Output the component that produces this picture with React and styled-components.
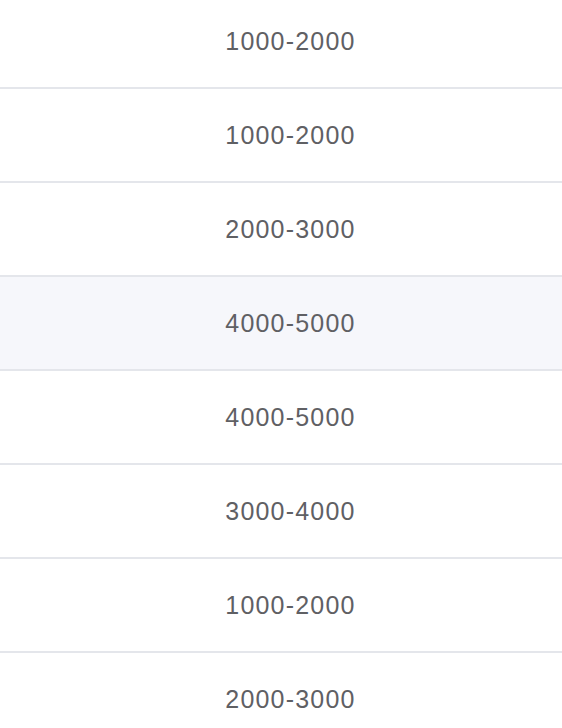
import React from "react";
import styled, { createGlobalStyle } from "styled-components";

const Global = createGlobalStyle`
  html, body { margin: 0; padding: 0; background: #ffffff; }
  body { font-family: "Liberation Sans", Arial, sans-serif; overflow: hidden; }
`;

const Table = styled.div`
  display: flex;
  flex-direction: column;
  width: 562px;
  margin-top: -5px;
`;

const Row = styled.div`
  display: flex;
  align-items: center;
  justify-content: center;
  height: 92px;
  border-bottom: 2px solid #e4e6eb;
  background: ${(p) => (p.$active ? "#f6f7fb" : "#ffffff")};
`;

const Cell = styled.span`
  font-size: 25px;
  line-height: 1;
  letter-spacing: 1.2px;
  color: #5f6064;
  padding-left: 19px;
`;

const rows = [
  "1000-2000",
  "1000-2000",
  "2000-3000",
  "4000-5000",
  "4000-5000",
  "3000-4000",
  "1000-2000",
  "2000-3000",
];

export default function App() {
  return (
    <>
      <Global />
      <Table>
        {rows.map((r, i) => (
          <Row key={i} $active={i === 3}>
            <Cell>{r}</Cell>
          </Row>
        ))}
      </Table>
    </>
  );
}
